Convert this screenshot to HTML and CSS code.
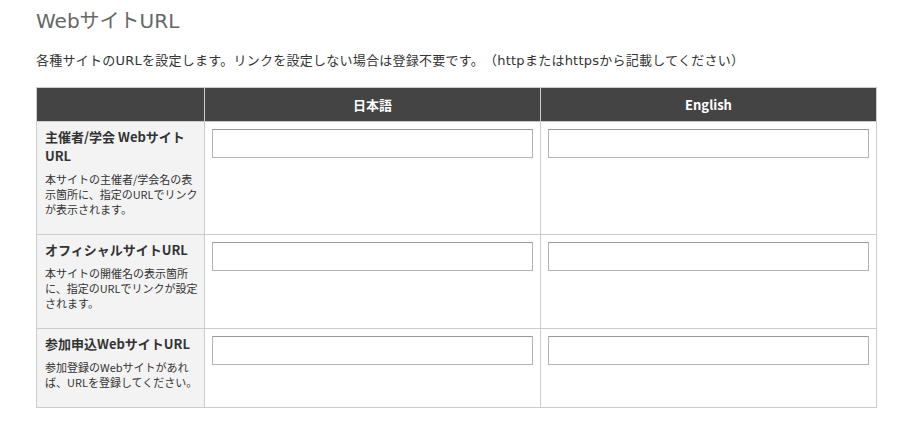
FILE: index.html
```html
<!DOCTYPE html>
<html lang="ja">
<head>
<meta charset="utf-8">
<title>WebサイトURL</title>
<link rel="stylesheet" href="styles.css">
</head>
<body>
<div class="page">
  <h2 class="title">WebサイトURL</h2>
  <p class="lead">各種サイトのURLを設定します。リンクを設定しない場合は登録不要です。（httpまたはhttpsから記載してください）</p>
  <table class="url-table">
    <colgroup>
      <col class="col-label">
      <col class="col-lang">
      <col class="col-lang">
    </colgroup>
    <thead>
      <tr>
        <th class="head"></th>
        <th class="head">日本語</th>
        <th class="head">English</th>
      </tr>
    </thead>
    <tbody>
      <tr>
        <th class="label">
          <div class="label-title">主催者/学会 WebサイトURL</div>
          <div class="label-note">本サイトの主催者/学会名の表<br>示箇所に、指定のURLでリンク<br>が表示されます。</div>
        </th>
        <td class="field"><input class="text-input" type="text"></td>
        <td class="field"><input class="text-input" type="text"></td>
      </tr>
      <tr>
        <th class="label">
          <div class="label-title">オフィシャルサイトURL</div>
          <div class="label-note">本サイトの開催名の表示箇所<br>に、指定のURLでリンクが設定<br>されます。</div>
        </th>
        <td class="field"><input class="text-input" type="text"></td>
        <td class="field"><input class="text-input" type="text"></td>
      </tr>
      <tr>
        <th class="label">
          <div class="label-title">参加申込WebサイトURL</div>
          <div class="label-note">参加登録のWebサイトがあれ<br>ば、URLを登録してください。</div>
        </th>
        <td class="field"><input class="text-input" type="text"></td>
        <td class="field"><input class="text-input" type="text"></td>
      </tr>
    </tbody>
  </table>
</div>
</body>
</html>
```
FILE: styles.css
```css
html, body {
  margin: 0;
  padding: 0;
  background: #fff;
}
body {
  font-family: "Noto Sans CJK JP", sans-serif;
  color: #333;
  text-spacing-trim: space-all;
}
.page {
  padding: 9px 0 0 36px;
}
.title {
  margin: 0;
  font-family: "DejaVu Sans", "Noto Sans CJK JP", sans-serif;
  font-size: 20px;
  line-height: 24px;
  font-weight: normal;
  color: #666;
}
.lead {
  margin: 18px 0 16px;
  font-family: "DejaVu Sans", "Noto Sans CJK JP", sans-serif;
  font-size: 13px;
  line-height: 20px;
  letter-spacing: 0.25px;
  color: #333;
}
.url-table {
  border-collapse: collapse;
  table-layout: fixed;
  width: 841px;
}
.col-label {
  width: 168px;
}
.col-lang {
  width: 336px;
}
.url-table th,
.url-table td {
  border: 1px solid #ccc;
}
.head {
  background: #444;
  color: #fff;
  font-size: 13px;
  font-weight: bold;
  line-height: 19px;
  padding: 7px 8px;
  text-align: center;
}
.label {
  background: #f3f3f3;
  text-align: left;
  vertical-align: top;
  padding: 5px 8px 17px;
  font-weight: normal;
}
.label-title {
  font-size: 13px;
  font-weight: bold;
  line-height: 19px;
  color: #333;
}
.label-note {
  margin-top: 7px;
  font-size: 11px;
  line-height: 15px;
  color: #333;
  white-space: nowrap;
}
.field {
  vertical-align: top;
  padding: 7px;
  background: #fff;
}
.text-input {
  display: block;
  box-sizing: border-box;
  width: 100%;
  height: 29px;
  margin: 0;
  padding: 0 4px;
  border: 1px solid #b3b3b3;
  border-top-color: #999;
  border-radius: 0;
  background: #fff;
  font: inherit;
  font-size: 13px;
}
```
